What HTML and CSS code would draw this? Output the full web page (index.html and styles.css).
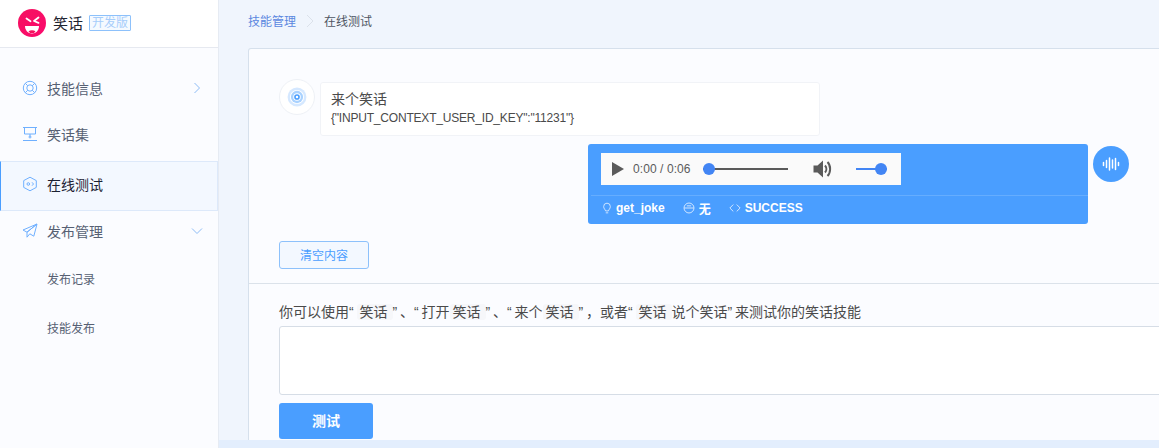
FILE: index.html
```html
<!DOCTYPE html>
<html lang="zh">
<head>
<meta charset="utf-8">
<title>在线测试</title>
<link rel="stylesheet" href="styles.css">
</head>
<body>
<div class="app">
  <aside class="sidebar">
    <div class="brand">
      <svg class="logo" viewBox="0 0 28 28" width="28" height="28">
        <defs><linearGradient id="lg" x1="0" y1="0" x2="1" y2="1"><stop offset="0" stop-color="#f5115f"/><stop offset="1" stop-color="#fb0a6e"/></linearGradient></defs>
        <circle cx="14" cy="14" r="14" fill="url(#lg)"/>
        <path d="M8.500 9.500l4 2.700M20.500 8.500l-4.500 3.500 4.500 1.800" stroke="#fff" stroke-width="1.800" fill="none" stroke-linecap="round" stroke-linejoin="round"/>
        <path d="M7 17h14c0 4.500-3 7.500-7 7.500s-7-3-7-7.500z" fill="#fff"/>
        <path d="M10.500 22.300c2-1.300 5-1.300 7 0l-1.500 1.700h-4z" fill="#f5115f"/>
      </svg>
      <span class="brand-name">笑话</span>
      <span class="brand-tag">开发版</span>
    </div>
    <nav class="menu">
      <a class="item item-first">
        <svg class="ico" viewBox="0 0 16 16"><circle cx="8" cy="8" r="6.700"/><circle cx="8" cy="8" r="3.200"/><path d="M3.300 3.300l2.400 2.400M12.700 3.300l-2.400 2.400M3.300 12.700l2.400-2.400M12.700 12.700l-2.400-2.400"/></svg>
        <span class="label">技能信息</span>
        <svg class="caret" viewBox="0 0 10 12"><path d="M2.500 1l5 5-5 5"/></svg>
      </a>
      <a class="item">
        <svg class="ico" viewBox="0 0 16 16"><path d="M1 1.500h14M2.500 1.500v6.500h11v-6.500M8 8v2.500M1 14.500h14"/><circle cx="8" cy="11" r="1"/></svg>
        <span class="label">笑话集</span>
      </a>
      <a class="item active">
        <svg class="ico" viewBox="0 0 16 16"><path d="M8 1.200l6.300 3.400v6.800l-6.300 3.400-6.300-3.400v-6.800z"/><circle cx="6.300" cy="8" r="1.300"/><path d="M10 6.300l1.500 1.700-1.500 1.700"/></svg>
        <span class="label">在线测试</span>
      </a>
      <a class="item">
        <svg class="ico" viewBox="0 0 16 16"><path d="M15 1L1 7l4 2.200L15 1zM15 1L5 9.200v5l2.800-3.400 4 2.400L15 1z"/></svg>
        <span class="label">发布管理</span>
        <svg class="caret caret-down" viewBox="0 0 12 8"><path d="M1 1.500l5 5 5-5"/></svg>
      </a>
      <a class="sub">发布记录</a>
      <a class="sub">技能发布</a>
    </nav>
  </aside>
  <main class="main">
    <div class="crumbs">
      <a class="crumb-link">技能管理</a>
      <svg class="crumb-sep" viewBox="0 0 8 14"><path d="M1 1l6 6-6 6"/></svg>
      <span class="crumb-now">在线测试</span>
    </div>
    <section class="card">
      <div class="chat">
        <div class="row">
          <span class="avatar">
            <svg viewBox="0 0 36 36" width="36" height="36"><circle cx="18" cy="18" r="10" fill="#d5e8ff"/><circle cx="18" cy="18" r="7.500" fill="#fff"/><circle cx="18" cy="18" r="6.500" fill="#a9d2ff"/><circle cx="18" cy="18" r="4" fill="#fff"/><circle cx="18" cy="18" r="3" fill="#4a9eff"/><circle cx="18" cy="18" r="1.300" fill="#fff"/></svg>
          </span>
          <div class="bubble">
            <div class="bubble-title">来个笑话</div>
            <div class="bubble-code">{"INPUT_CONTEXT_USER_ID_KEY":"11231"}</div>
          </div>
        </div>
        <div class="row row-right">
          <div class="reply">
            <div class="player">
              <svg class="play" viewBox="0 0 12 14"><path d="M0 0L12 7 0 14z"/></svg>
              <span class="time">0:00 / 0:06</span>
              <span class="track"><i class="knob"></i></span>
              <svg class="speaker" viewBox="0 0 20 20"><path d="M0.500 6.500h4L10 1.500v17l-5.500-5h-4z" fill="#5a5a5a"/><path d="M12 6.500c1.800 2 1.800 5 0 7" fill="none" stroke="#5a5a5a" stroke-width="2"/><path d="M14.500 3c3.500 3.500 3.500 10.500 0 14" fill="none" stroke="#5a5a5a" stroke-width="2"/></svg>
              <span class="volume"><i class="knob"></i></span>
            </div>
            <div class="meta">
              <span class="meta-item">
                <svg class="meta-ico" viewBox="0 0 12 14"><path d="M4.300 10.500C3.800 8.500 2 8 2 5.200a4 4 0 0 1 8 0c0 2.800-1.800 3.300-2.300 5.300zM4.500 12.800h3"/></svg>get_joke
              </span>
              <span class="meta-item">
                <svg class="meta-ico meta-wide" viewBox="0 0 14 14"><circle cx="7" cy="7" r="5.800"/><path d="M1.500 7h11M4.500 4.500h5"/></svg>无
              </span>
              <span class="meta-item">
                <svg class="meta-ico meta-wide" viewBox="0 0 14 14"><path d="M5 3L1 7l4 4M9 3l4 4-4 4"/></svg>SUCCESS
              </span>
            </div>
          </div>
          <span class="avatar-blue">
            <svg viewBox="0 0 36 36" width="36" height="36"><path d="M10.500 16.500v3M13.500 14.500v7M16.500 12v12M19.500 14v8M22.500 12.500v11M25.500 16.500v3" stroke="#fff" stroke-width="1.500" stroke-linecap="round" fill="none"/></svg>
          </span>
        </div>
        <button class="btn-clear" type="button">清空内容</button>
      </div>
      <div class="composer">
        <p class="hint">你可以使用<span class="q">“</span><span class="chip">笑话</span><span class="q">”</span>、<span class="q">“</span>打开<span class="chip">笑话</span><span class="q">”</span>、<span class="q">“</span>来个<span class="chip">笑话</span><span class="q">”</span>&#xFF0C;或者<span class="q">“</span><span class="chip">笑话</span>说个笑话<span class="q">”</span>来测试你的笑话技能</p>
        <textarea class="input"></textarea>
        <button class="btn-test" type="button">测试</button>
      </div>
    </section>
  </main>
</div>
</body>
</html>
```

FILE: styles.css
```css
* { box-sizing: border-box; }
html, body { margin: 0; height: 100%; overflow: hidden; }
body {
  font-family: "Liberation Sans", "Noto Sans CJK SC", sans-serif;
  color: #4a4a4a;
  background: #f0f5fd;
}
.app { display: flex; height: 448px; width: 1159px; overflow: hidden; }

.sidebar {
  width: 219px;
  flex: none;
  background: #fbfcff;
  border-right: 1px solid #e6ebf3;
}
.brand {
  display: flex;
  align-items: center;
  height: 48px;
  padding: 0 0 2px 18px;
  background: #fff;
  border-bottom: 1px solid #e6e9f0;
}
.logo { flex: none; }
.brand-name { margin-left: 7px; font-size: 15px; color: #1f2430; }
.brand-tag {
  margin-left: 6px;
  padding: 0 2px;
  height: 16px;
  line-height: 14px;
  font-size: 12px;
  color: #a7cdfb;
  border: 1px solid #8dc1fb;
  border-radius: 1px;
  background: #f5faff;
}
.menu { display: flex; flex-direction: column; padding-top: 17px; }
.item {
  display: flex;
  align-items: center;
  height: 46px;
  padding-left: 22px;
  font-size: 14px;
  color: #566073;
}
.item.active {
  height: 50px;
  margin: 4px 0 -3px;
  padding-bottom: 4px;
  color: #1b2233;
  background: #f3f8ff;
  border: 1px solid #dde9fa;
  border-left: 1px solid #4a9eff;
  padding-left: 21px;
}
.ico {
  width: 16px;
  height: 16px;
  flex: none;
  fill: none;
  stroke: #6fb0ff;
  stroke-width: 1;
  stroke-linejoin: round;
}
.label { margin-left: 9px; }
.caret {
  width: 10px;
  height: 12px;
  margin-left: auto;
  margin-right: 16px;
  fill: none;
  stroke: #8dbcf6;
  stroke-width: 1;
}
.caret-down { width: 12px; height: 8px; margin-right: 15px; }
.sub {
  display: flex;
  align-items: center;
  height: 49px;
  padding-left: 47px;
  font-size: 12px;
  color: #566073;
}

.main {
  flex: 1;
  min-width: 0;
  display: flex;
  flex-direction: column;
  padding-left: 29px;
  background: #f0f5fd;
  border-bottom: 8px solid #e3eefd;
}
.crumbs {
  display: flex;
  align-items: center;
  height: 48px;
  padding-bottom: 7px;
  font-size: 12px;
  flex: none;
}
.crumb-link { color: #5b87e0; }
.crumb-sep {
  width: 8px;
  height: 14px;
  margin: 0 10px 0 10px;
  fill: none;
  stroke: #dbe1ea;
  stroke-width: 1;
}
.crumb-now { color: #4f5663; }
.card {
  flex: 1;
  min-height: 0;
  width: 930px;
  background: #fbfcff;
  border: 1px solid #d6e0ec;
  border-bottom: 0;
  border-radius: 3px 0 0 0;
  overflow: hidden;
}
.chat {
  height: 235px;
  padding: 30px 0 0 30px;
  border-bottom: 1px solid #dbe2ea;
  display: flex;
  flex-direction: column;
}
.row { display: flex; width: 850px; }
.row-right { justify-content: flex-end; margin-top: 8px; }
.avatar {
  width: 36px;
  height: 36px;
  flex: none;
  border-radius: 50%;
  background: #fff;
  border: 1px solid #eef1f6;
  margin-right: 5px;
  display: flex;
  align-items: center;
  justify-content: center;
  overflow: hidden;
}
.bubble {
  width: 500px;
  height: 54px;
  margin-top: 3px;
  padding: 6px 10px;
  background: #fff;
  border: 1px solid #f1f3f7;
  border-radius: 3px;
}
.bubble-title { font-size: 14px; line-height: 21px; color: #4a4a4a; }
.bubble-code { font-size: 12px; line-height: 16px; color: #4a4a4a; letter-spacing: -0.2px; }
.reply {
  width: 500px;
  height: 80px;
  padding: 9px 0 0 3px;
  margin-right: 5px;
  background: #4a9eff;
  border-radius: 3px;
}
.player {
  display: flex;
  align-items: center;
  width: 300px;
  height: 32px;
  margin-left: 10px;
  background: #fafafa;
  color: #5a5a5a;
}
.play { width: 12px; height: 14px; margin-left: 11px; fill: #5a5a5a; flex: none; }
.time { margin-left: 9px; font-size: 12px; width: 60px; white-space: nowrap; letter-spacing: 0.08px; }
.track {
  position: relative;
  display: block;
  width: 85px;
  height: 2px;
  margin-left: 10px;
  background: #5a5a5a;
}
.knob {
  position: absolute;
  left: 0;
  top: -5px;
  width: 12px;
  height: 12px;
  border-radius: 50%;
  background: #4285f4;
}
.speaker { width: 20px; height: 20px; margin-left: 25px; flex: none; }
.volume {
  position: relative;
  display: block;
  width: 31px;
  height: 2px;
  margin-left: 23px;
  background: #4285f4;
}
.volume .knob { left: 19px; }
.meta {
  display: flex;
  align-items: center;
  height: 29px;
  margin-top: 10px;
  padding: 0 0 4px 11px;
  border-top: 1px solid #65adff;
  font-size: 12px;
  font-weight: 700;
  color: #fff;
}
.meta-item { display: flex; align-items: center; margin-right: 18px; white-space: nowrap; }
.meta-ico {
  width: 10px;
  height: 12px;
  margin-right: 4px;
  fill: none;
  stroke: #e6f1ff;
  stroke-width: 1;
}
.meta-wide { width: 12px; height: 12px; }
.avatar-blue {
  width: 36px;
  height: 36px;
  flex: none;
  border-radius: 50%;
  background: #4a9eff;
  margin-top: 2px;
}
.btn-clear {
  width: 90px;
  height: 28px;
  margin-top: 17px;
  padding: 0 0 2px;
  font: inherit;
  font-size: 12px;
  color: #4a9eff;
  background: #f3f8ff;
  border: 1px solid #8dc1fb;
  border-radius: 3px;
}
.composer { padding: 0 0 0 30px; }
.hint {
  margin: 0;
  padding-top: 18px;
  height: 42px;
  line-height: 20px;
  font-size: 14px;
  color: #4a4a4a;
  white-space: nowrap;
}
.q { display: inline-block; width: 7.5px; }
.chip {
  padding: 0 5px 0 3px;
  border-radius: 3px;
  background: #f6f7fa;
}
.input {
  display: block;
  width: 900px;
  height: 69px;
  padding: 0;
  background: #fff;
  border: 1px solid #d6dde6;
  border-radius: 3px;
  resize: none;
}
.btn-test {
  display: block;
  width: 94px;
  height: 36px;
  margin-top: 8px;
  padding: 0 0 2px;
  font: inherit;
  font-size: 14px;
  font-weight: 700;
  color: #fff;
  background: #4a9eff;
  border: 0;
  border-radius: 3px;
}
```
